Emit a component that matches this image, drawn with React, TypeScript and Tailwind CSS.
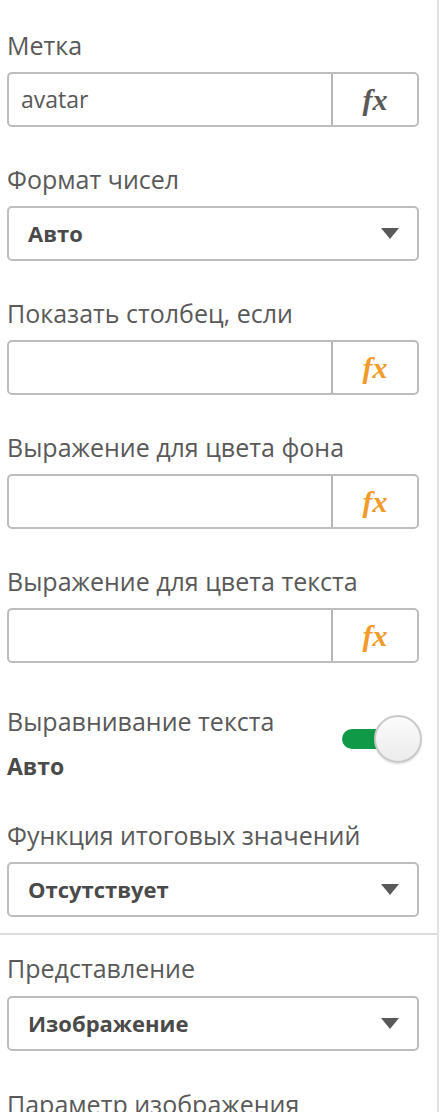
import React from "react";

const FONT = { fontFamily: '"Open Sans", "Noto Sans", sans-serif' };

function Label({ children, className = "" }: { children: React.ReactNode; className?: string }) {
  return (
    <div className={"text-[25px] leading-[28px] text-[#595959] whitespace-nowrap " + className}>{children}</div>
  );
}

function Fx({ active }: { active: boolean }) {
  return (
    <div className="w-[86px] h-full flex items-center justify-center border-l-2 border-[#b5b5b5]">
      <span
        className={"text-[30px] font-bold italic leading-none " + (active ? "text-[#595959]" : "text-[#f29b2b]")}
        style={{ fontFamily: '"Liberation Serif", "DejaVu Serif", serif' }}
      >
        fx
      </span>
    </div>
  );
}

function FxInput({ value }: { value?: string }) {
  return (
    <div className="h-[55px] w-[412px] flex border-2 border-[#bdbdbd] rounded-[5px] bg-white">
      <div className="flex-1 flex items-center pl-[12px] text-[23px] text-[#595959]">{value}</div>
      <Fx active={!!value} />
    </div>
  );
}

function Dropdown({ value }: { value: string }) {
  return (
    <div className="h-[55px] w-[412px] flex items-center justify-between border-2 border-[#bdbdbd] rounded-[5px] bg-white pl-[19px] pr-[18px]">
      <span className="text-[22px] font-bold text-[#4a4a4a]">{value}</span>
      <svg width="18" height="11" viewBox="0 0 18 11">
        <polygon points="0,0 18,0 9,11" fill="#595959" />
      </svg>
    </div>
  );
}

export default function App() {
  return (
    <div className="w-[442px] h-[1112px] overflow-hidden bg-white flex" style={FONT}>
      <div className="w-[439px] shrink-0 border-r-2 border-[#e4e4e4] flex flex-col">
        <div className="shrink-0 pl-[7px] pt-[31px] flex flex-col">
          <Label>Метка</Label>
          <div className="mt-[13px]"><FxInput value="avatar" /></div>

          <Label className="mt-[38px]">Формат чисел</Label>
          <div className="mt-[13px]"><Dropdown value="Авто" /></div>

          <Label className="mt-[38px]">Показать столбец, если</Label>
          <div className="mt-[13px]"><FxInput /></div>

          <Label className="mt-[38px]">Выражение для цвета фона</Label>
          <div className="mt-[13px]"><FxInput /></div>

          <Label className="mt-[38px]">Выражение для цвета текста</Label>
          <div className="mt-[13px]"><FxInput /></div>

          <div className="mt-[44px] w-[412px] flex justify-between items-start">
            <div className="flex flex-col">
              <Label>Выравнивание текста</Label>
              <div className="mt-[17px] text-[23px] leading-[28px] font-bold text-[#4a4a4a]">Авто</div>
            </div>
            <div className="relative w-[80px] h-[48px] mt-[8px] -mr-[3px]">
              <div className="absolute left-0 top-[14px] w-[50px] h-[20px] rounded-full bg-[#109a48]" />
              <div className="absolute right-0 top-0 w-[48px] h-[48px] rounded-full border-2 border-[#c9c9c9] bg-gradient-to-b from-[#fbfbfb] to-[#ececec] shadow-[0_1px_2px_rgba(0,0,0,0.15)]" />
            </div>
          </div>

          <Label className="mt-[41px]">Функция итоговых значений</Label>
          <div className="mt-[13px]"><Dropdown value="Отсутствует" /></div>
        </div>

        <div className="shrink-0 mt-[16px] h-[2px] bg-[#dedede]" />

        <div className="shrink-0 pl-[7px] pt-[19px] flex flex-col">
          <Label>Представление</Label>
          <div className="mt-[14px]"><Dropdown value="Изображение" /></div>
          <Label className="mt-[39px]">Параметр изображения</Label>
        </div>
      </div>
    </div>
  );
}
